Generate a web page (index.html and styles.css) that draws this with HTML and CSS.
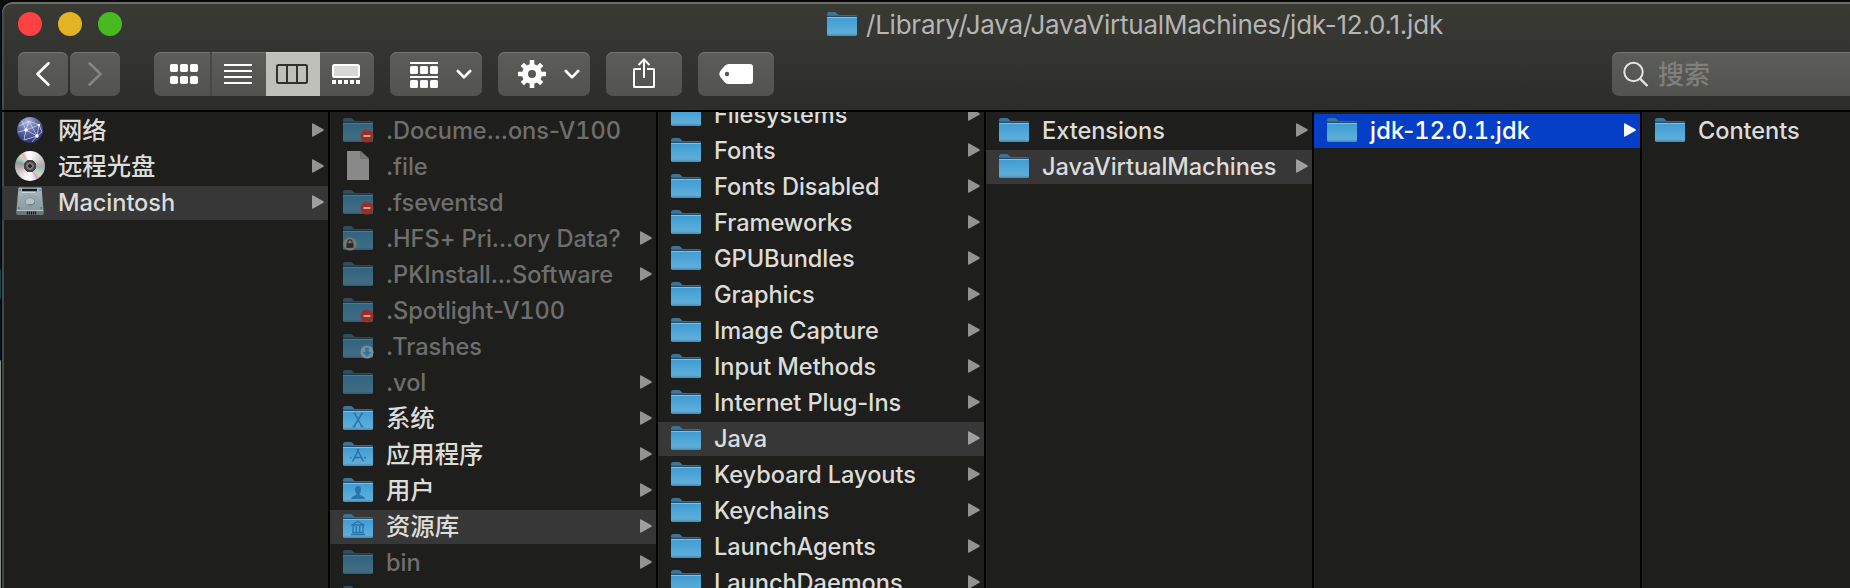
FILE: index.html
```html
<!DOCTYPE html>
<html lang="zh-CN">
<head>
<meta charset="utf-8">
<title>Finder</title>
<link rel="stylesheet" href="styles.css">
</head>
<body>
<svg class="defs" width="0" height="0" aria-hidden="true">
  <defs>
    <linearGradient id="gFolder" x1="0" y1="0" x2="0" y2="1">
      <stop offset="0" stop-color="#3d9dd4"/><stop offset="0.85" stop-color="#5faed8"/><stop offset="1" stop-color="#4488b0"/>
    </linearGradient>
    <radialGradient id="gGlobe" cx="0.4" cy="0.2" r="0.85">
      <stop offset="0" stop-color="#b3b9dc"/><stop offset="0.4" stop-color="#6670ae"/><stop offset="1" stop-color="#252c66"/>
    </radialGradient>
    <linearGradient id="gDisk" x1="0" y1="0" x2="0" y2="1">
      <stop offset="0" stop-color="#a9bac1"/><stop offset="1" stop-color="#84959c"/>
    </linearGradient>
    <symbol id="folder" viewBox="0 0 30 26">
      <path d="M0 3Q0 0 2 0H7.5Q9 0 10 1.4T12 3H28.5Q30 3 30 4.5V8H0Z" fill="#3a7599"/>
      <path d="M0 4.4H29.5" stroke="#244c66" stroke-width="1.2"/>
      <path d="M0 5H30V22.5Q30 24 28.5 24H1.500Q0 24 0 22.500Z" fill="url(#gFolder)"/>
      <path d="M0.300 5.500H29.700" stroke="#79c3ea" stroke-width="1"/>
    </symbol>
    <symbol id="globe" viewBox="0 0 30 30">
      <circle cx="15" cy="15" r="13" fill="url(#gGlobe)"/>
      <path d="M4 11L14 6L24 10L27 17M3 17L11 15L22 21L27 17M14 6L11 15L9 25M24 10L22 21L17 27M7 6L11 15L24 10M9 25L22 21M14 6L22 21" fill="none" stroke="#d5dcfa" stroke-width="0.9" opacity=".8"/>
      <circle cx="11" cy="15" r="1.700" fill="#fff"/><circle cx="22" cy="21" r="1.700" fill="#fff"/><circle cx="24" cy="10" r="1.200" fill="#fff"/>
    </symbol>
    <symbol id="drive" viewBox="0 0 30 30">
      <path d="M3.500 0.500H26.500L28.500 23V26H1.500V23Z" fill="url(#gDisk)"/>
      <path d="M1.500 23.500H28.500V27Q28.500 28 27.500 28H2.500Q1.500 28 1.500 27Z" fill="#6c777b"/>
      <path d="M1.800 23.500H28.200" stroke="#c4d0d4" stroke-width=".8"/>
      <path d="M7 3H22" stroke="#15191b" stroke-width="2.400"/>
      <path d="M7 5.300H20" stroke="#dfe8ea" stroke-width="0.800"/>
      <path d="M4.500 21Q4 9 14 8Q25 8 25.500 21" fill="none" stroke="#90a2a9" stroke-width="1"/>
      <ellipse cx="15" cy="14.500" rx="4.800" ry="3.800" fill="#b3c1c7" stroke="#788b92" stroke-width=".8"/>
      <path d="M13 18Q18 18 20 16" fill="none" stroke="#65777f"/>
      <circle cx="5" cy="3" r=".8" fill="#4d595e"/><circle cx="25" cy="3" r=".8" fill="#4d595e"/><circle cx="4" cy="21" r=".8" fill="#4d595e"/><circle cx="26" cy="21" r=".8" fill="#4d595e"/>
      <path d="M12.500 24.500V27.500M14.500 24.500V27.500M16.500 24.500V27.500M18.500 24.500V27.500M20.500 24.500V27.500" stroke="#15191b" stroke-width="1.200"/>
    </symbol>
    <symbol id="doc" viewBox="0 0 22 29">
      <path d="M0 0H13.500L22 8.500V29H0Z" fill="#898989"/>
      <path d="M13.500 0V7.500H22Z" fill="#777" stroke="#666" stroke-width=".6"/>
    </symbol>
    <symbol id="denied" viewBox="0 0 14 14"><circle cx="7" cy="7" r="6.600" fill="#98302a"/><path d="M3.500 7H10.500" stroke="#bfa3a1" stroke-width="2"/></symbol>
    <symbol id="locked" viewBox="0 0 14 14"><circle cx="7" cy="7" r="6.600" fill="#777"/><path d="M4.900 6.500V5a2.100 2.300 0 0 1 4.200 0V6.500" fill="none" stroke="#292929" stroke-width="1.100"/><rect x="3.500" y="6.200" width="7" height="4.600" fill="#292929"/></symbol>
    <symbol id="dropbox" viewBox="0 0 14 14"><circle cx="7" cy="7" r="6.600" fill="#858b8d"/><path d="M5.200 2.500H8.800V7H11.200L7 11.800L2.800 7H5.200Z" fill="#2678b5"/></symbol>
    <symbol id="tri" viewBox="0 0 12 14"><path d="M0 1Q0 0 1.200 .4L11.400 6.200Q12.400 7 11.400 7.800L1.200 13.600Q0 14 0 13Z" fill="currentColor"/></symbol>
    <symbol id="chev" viewBox="0 0 16 11"><path d="M1.800 2L8 8.400L14.200 2" fill="none" stroke="#fff" stroke-width="2.600" stroke-linecap="round" stroke-linejoin="round"/></symbol>
  </defs>
</svg>
<div class="window">
  <header class="head">
    <div class="lights"><i class="light red"></i><i class="light yellow"></i><i class="light green"></i></div>
    <div class="title"><svg class="folder"><use href="#folder"/></svg><span>/Library/Java/JavaVirtualMachines/jdk-12.0.1.jdk</span></div>
    <div class="tools">
      <div class="btn nav"><svg width="50" height="44"><path d="M30.500 11.300L19.500 22L30.500 32.700" fill="none" stroke="#fff" stroke-width="2.600" stroke-linecap="round" stroke-linejoin="round"/></svg></div>
      <div class="btn nav"><svg width="50" height="44"><path d="M19.500 11.300L30.500 22L19.500 32.700" fill="none" stroke="#858583" stroke-width="2.600" stroke-linecap="round" stroke-linejoin="round"/></svg></div>
      <div class="btn views">
        <div class="view first"><svg width="56" height="44" fill="#fff"><rect x="16" y="12" width="8" height="8" rx="1.800"/><rect x="26" y="12" width="8" height="8" rx="1.800"/><rect x="36" y="12" width="8" height="8" rx="1.800"/><rect x="16" y="24" width="8" height="8" rx="1.800"/><rect x="26" y="24" width="8" height="8" rx="1.800"/><rect x="36" y="24" width="8" height="8" rx="1.800"/></svg></div>
        <div class="view"><svg width="54" height="44"><path d="M12 13H40M12 19H40M12 25H40M12 31H40" stroke="#fff" stroke-width="2"/></svg></div>
        <div class="view on"><svg width="54" height="44"><rect x="11" y="13" width="30" height="18" rx="1.500" fill="none" stroke="#31312f" stroke-width="2"/><path d="M21 13V31M31 13V31" stroke="#31312f" stroke-width="2"/></svg></div>
        <div class="view"><svg width="54" height="44"><rect x="13" y="13" width="26" height="12" rx="1.500" fill="#d8d8d6" stroke="#fff" stroke-width="2"/><path d="M12 30H40" stroke="#fff" stroke-width="4" stroke-dasharray="4 2"/></svg></div>
      </div>
      <div class="btn menu"><svg width="92" height="44" fill="#fff"><path d="M20 10H48V12H20zM20 24H48V26H20z"/><rect x="20" y="14" width="8" height="8" rx="1.500"/><rect x="30" y="14" width="8" height="8" rx="1.500"/><rect x="40" y="14" width="8" height="8" rx="1.500"/><rect x="20" y="28" width="8" height="8" rx="1.500"/><rect x="30" y="28" width="8" height="8" rx="1.500"/><rect x="40" y="28" width="8" height="8" rx="1.500"/><use href="#chev" x="66" y="17" width="16" height="11"/></svg></div>
      <div class="btn menu"><svg width="92" height="44"><g transform="translate(34 22)"><circle r="7" fill="none" stroke="#fff" stroke-width="6"/><path d="M0 -9V-14M0 9V14M-9 0H-14M9 0H14M6.500 -6.500L9.700 -9.700M-6.500 -6.500L-9.700 -9.700M6.500 6.500L9.700 9.700M-6.500 6.500L-9.700 9.700" stroke="#fff" stroke-width="4.600"/></g><use href="#chev" x="66" y="17" width="16" height="11"/></svg></div>
      <div class="btn action"><svg width="76" height="44"><path d="M35 17H28.500Q28 17 28 17.500V34.500Q28 35 28.500 35H47.500Q48 35 48 34.500V17.500Q48 17 47.500 17H41M38 26V8M32.500 13L38 7.500L43.500 13" fill="none" stroke="#fff" stroke-width="2"/></svg></div>
      <div class="btn action"><svg width="76" height="44"><path fill-rule="evenodd" d="M30.500 12H52Q55 12 55 15V29Q55 32 52 32H30.500Q28 32 26 29.500L22 24.500Q20.500 22 22 19.500L26 14.500Q28 12 30.500 12ZM29 19.800a2.200 2.200 0 1 0 0 4.400a2.200 2.200 0 1 0 0-4.400Z" fill="#fff"/></svg></div>
      <div class="btn search"><svg width="26" height="26"><circle cx="10.500" cy="11" r="9.200" fill="none" stroke="#e4e4e2" stroke-width="2"/><path d="M17.200 17.800L24.500 25" stroke="#e4e4e2" stroke-width="2.400"/></svg><span>搜索</span></div>
    </div>
  </header>
  <main class="cols" id="cols"></main>
</div>
<script src="finder.js"></script>
</body>
</html>
```
FILE: styles.css
```css
* { box-sizing: border-box; }
body { margin: 0; width: 1850px; height: 588px; overflow: hidden; background: linear-gradient(#0d0d0d 0 8px, #06101e 8px 268px, #12414c 270px 298px, #020b1a 300px 360px, #8a8d8d 361px); font-family: Inter, "Noto Sans CJK SC", sans-serif; font-size: 23.6px; }
.defs { display: block; height: 0; }
.window { height: 588px; margin-left: 1px; border-top: 2px solid #080808; border-left: 1px solid #050505; background: #1e1e1c; border-radius: 12px 0 0 0; overflow: hidden; display: flex; flex-direction: column; }
.head { height: 110px; flex: none; border-bottom: 2px solid #000; border-radius: 10px 0 0 0; background: linear-gradient(#3a3a35, #2c2c2a); box-shadow: inset 0 2px 0 #6c6c68, inset 2px 0 0 #4a4a47; display: grid; grid-template-columns: 1fr; grid-template-rows: 50px 44px; }
.lights { grid-area: 1 / 1; display: flex; gap: 16px; padding: 10px 0 0 16px; }
.light { width: 24px; height: 24px; border-radius: 50%; }
.red { background: #fc4242; }
.yellow { background: #e0b422; }
.green { background: #46ba20; }
.title { grid-area: 1 / 1; display: flex; gap: 9px; padding: 10px 0 0 825px; color: #b5b5b2; font-size: 26px; letter-spacing: -0.23px; line-height: 25px; white-space: nowrap; }
.folder { display: block; width: 30px; height: 26px; flex: none; }
.tools { display: flex; padding-left: 16px; }
.btn { height: 44px; border-radius: 7px; background: linear-gradient(#5c5c59, #52524f); box-shadow: inset 0 1px 0 #747471; overflow: hidden; flex: none; margin-right: 16px; }
.btn svg { display: block; }
.nav { width: 50px; margin-right: 2px; }
.nav + .views { margin-left: 32px; }
.views { width: 220px; display: flex; }
.view { width: 54px; }
.view.first { width: 58px; border-right: 2px solid #484846; }
.view.on { background: #bfc0ba; box-shadow: inset 0 1px 0 #cdcec9; }
.menu { width: 92px; }
.action { width: 76px; }
.search { width: 258px; margin: 0 -20px 0 auto; display: flex; align-items: center; gap: 9px; padding-left: 11px; color: #7f7f7c; font-size: 26px; font-weight: 500; }
.search span { line-height: 44px; margin-top: 1px; }
.cols { flex: 1; min-height: 0; display: flex; overflow: hidden; }
.col { width: 328px; flex: none; border-right: 2px solid #000; padding-top: 2px; height: 476px; overflow: hidden; }
.col:first-child { box-shadow: inset 2px 0 0 #454745; }
.col.scrolled { padding-top: 0; }
.scrolled .row:first-child { margin-top: -14px; }
.col:last-child { border: 0; }
.row { height: 34px; margin-bottom: 2px; display: grid; grid-template-columns: 30px 1fr 12px; column-gap: 13px; padding: 0 4px 0 13px; color: #dcdcda; font-weight: 450; line-height: 34px; white-space: nowrap; letter-spacing: -0.06px; }
.row .num { font-variant-numeric: tabular-nums; }
.row .cjk { font-size: 24.4px; font-weight: 500; line-height: 33px; }
.row.sel { background: #373737; }
.row.active { background: #063fc7; color: #fff; font-weight: 500; letter-spacing: 0.2px; }
.row.dim { color: #6e6e6d; }
.icon { width: 30px; height: 34px; position: relative; }
.icon .folder { margin-top: 4px; }
.dim .icon .folder { opacity: .55; }
.icon .round { display: block; width: 30px; height: 30px; margin-top: 1px; }
.icon .doc { display: block; width: 22px; height: 29px; margin: 1px 0 0 4px; }
.badge { position: absolute; width: 14px; height: 14px; right: -1px; top: 15px; }
.badge.left { right: auto; left: 0; }
.glyph { position: absolute; left: 0; top: 4px; width: 30px; height: 26px; }
.disc { width: 30px; height: 30px; margin-top: 1px; border-radius: 50%; background: radial-gradient(circle, #222 0 1.5px, #777 2px 3.5px, #444 4px 6px, transparent 6.5px), conic-gradient(#fff, #ddd 40deg, #b9b0b2 80deg, #aaa 95deg, #9ed6d8 120deg, #e8d6a0 135deg, #c8a8e0 150deg, #eee 165deg, #fff 190deg, #ddd 225deg, #b5a8a8 265deg, #999 285deg, #88cfd0 302deg, #ead48e 317deg, #d7b6e0 330deg, #fff 345deg); }
.arrow { grid-column: 3; width: 12px; height: 14px; margin-top: 9px; color: #939392; }
.sel .arrow { color: #9f9f9f; }
.active .arrow { color: #fff; }
```
FILE: finder.js
```js
// Row: [name, icon, flags]; flags: d = dimmed, s = in path, a = active, n = no arrow
const columns = [
  [["网络", "globe", ""], ["远程光盘", "disc", ""], ["Macintosh", "drive", "s"]],
  [[".Docume...ons-V100", "denied", "dn"], [".file", "doc", "dn"], [".fseventsd", "denied", "dn"],
   [".HFS+ Pri...ory Data?", "locked", "d"], [".PKInstall...Software", "folder", "d"], [".Spotlight-V100", "denied", "dn"],
   [".Trashes", "dropbox", "dn"], [".vol", "folder", "d"], ["系统", "sys", ""], ["应用程序", "apps", ""],
   ["用户", "users", ""], ["资源库", "lib", "s"], ["bin", "folder", "d"], ["", "folder", "dn"]],
  ["Filesystems", "Fonts", "Fonts Disabled", "Frameworks", "GPUBundles", "Graphics", "Image Capture", "Input Methods",
   "Internet Plug-Ins", "Java", "Keyboard Layouts", "Keychains", "LaunchAgents", "LaunchDaemons"]
    .map(n => [n, "folder", n === "Java" ? "s" : ""]),
  [["Extensions", "folder", ""], ["JavaVirtualMachines", "folder", "s"]],
  [["jdk-12.0.1.jdk", "folder", "a"]],
  [["Contents", "folder", "n"]]
];
const glyphs = {
  sys: '<path d="M10.500 7.500H13M18 7.500H20M9.500 20.500H12.500M17.500 20.500H20.500M11.500 7.500L19 20.500M19 7.500L11 20.500" stroke-width="1.500"/>',
  apps: '<path d="M14 7L20.500 19.500M16 7L9.500 19.500M7 15.500H8.500M11 15.500H18.500M21 15.500H23" stroke-width="1.600"/>',
  users: '<path d="M15 8Q18 8 18 11.500Q18 14 16.700 15.500V17Q21.500 18 22 21H8Q8.500 18 13.300 17V15.500Q12 14 12 11.500Q12 8 15 8Z" fill="#2a73ab" stroke="none"/>',
  lib: '<path d="M8.500 11L15 7.500L21.500 11ZM10 12V18.500M13.300 12V18.500M16.700 12V18.500M20 12V18.500M9 18.500H21M8 20.500H22" stroke-width="1.300"/>'
};
const use = (cls, id) => `<svg class="${cls}"><use href="#${id}"/></svg>`;
function icon(kind) {
  if (kind === "disc") return '<div class="disc"></div>';
  if (kind === "doc") return use("doc", "doc");
  if (kind === "globe" || kind === "drive") return use("round", kind);
  let out = use("folder", "folder");
  if (glyphs[kind]) out += `<svg class="glyph" fill="none" stroke="#2a73ab">${glyphs[kind]}</svg>`;
  else if (kind !== "folder") out += use("badge" + (kind === "locked" ? " left" : ""), kind);
  return out;
}
document.getElementById("cols").innerHTML = columns.map((rows, i) =>
  `<section class="col${i === 2 ? " scrolled" : ""}">` + rows.map(([name, kind, f]) => {
    const cls = "row" + (f.includes("d") ? " dim" : "") + (f.includes("s") ? " sel" : "") + (f.includes("a") ? " active" : "");
    const cjk = /[\u4e00-\u9fff]/.test(name) ? ' class="cjk"' : "";
    const label = name.replace(/\d[\d.]*/g, d => `<span class="num">${d}</span>`);
    return `<div class="${cls}"><div class="icon">${icon(kind)}</div><span${cjk}>${label}</span>${f.includes("n") ? "" : use("arrow", "tri")}</div>`;
  }).join("") + "</section>").join("");
```
